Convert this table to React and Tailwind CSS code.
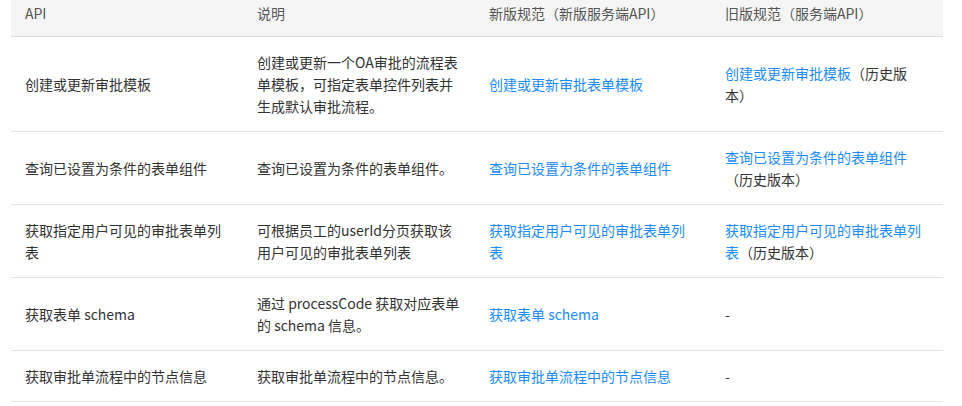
import React from "react";

const L = ({ children }) => <span className="text-[#1a8cff]">{children}</span>;

const rows = [
  [
    "创建或更新审批模板",
    "创建或更新一个OA审批的流程表单模板，可指定表单控件列表并生成默认审批流程。",
    <L>创建或更新审批表单模板</L>,
    <>
      <L>创建或更新审批模板</L>（历史版
      <br />
      本）
    </>,
  ],
  [
    "查询已设置为条件的表单组件",
    "查询已设置为条件的表单组件。",
    <L>查询已设置为条件的表单组件</L>,
    <>
      <L>查询已设置为条件的表单组件</L>
      <br />
      （历史版本）
    </>,
  ],
  [
    "获取指定用户可见的审批表单列表",
    "可根据员工的userId分页获取该用户可见的审批表单列表",
    <L>获取指定用户可见的审批表单列表</L>,
    <>
      <L>获取指定用户可见的审批表单列</L>
      <br />
      <L>表</L>（历史版本）
    </>,
  ],
  [
    "获取表单 schema",
    "通过 processCode 获取对应表单的 schema 信息。",
    <L>获取表单 schema</L>,
    "-",
  ],
  [
    "获取审批单流程中的节点信息",
    "获取审批单流程中的节点信息。",
    <L>获取审批单流程中的节点信息</L>,
    "-",
  ],
];

export default function App() {
  return (
    <div
      lang="zh-CN"
      className="w-[962px] h-[406px] bg-white overflow-hidden text-[14px] leading-[22px] text-[#333]"
      style={{ fontFamily: '"Microsoft YaHei", "Noto Sans CJK SC", sans-serif' }}
    >
      <div className="ml-[11px] w-[932px]">
        <div className="grid grid-cols-[232px_232px_236px_232px] bg-[#f5f5f5] border-b border-[#dcdcdc] text-[#555]">
          {["API", "说明", "新版规范（新版服务端API）", "旧版规范（服务端API）"].map((h) => (
            <div key={h} className="px-[14px] pt-[2px] pb-[12px]">
              {h}
            </div>
          ))}
        </div>
        {rows.map((r, i) => (
          <div
            key={i}
            className="grid grid-cols-[232px_232px_236px_232px] border-b border-[#e3e3e3]"
          >
            {r.map((c, j) => (
              <div key={j} className="px-[14px] py-[14px] flex items-center">
                <div className="w-full break-words">{c}</div>
              </div>
            ))}
          </div>
        ))}
      </div>
    </div>
  );
}
